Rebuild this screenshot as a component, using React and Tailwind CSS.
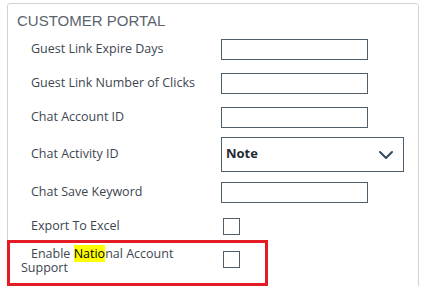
import { ChevronDown } from "lucide-react";

const TextRow = ({ label }) => (
  <div className="flex items-center h-[34px]">
    <label className="w-[213px] pl-[23px] text-[12.5px] text-[#3d4650]">{label}</label>
    <input className="w-[147px] h-[21px] border border-[#4f5f6c] bg-white" />
  </div>
);

const CheckRow = ({ label }) => (
  <div className="flex items-center h-[34px]">
    <label className="w-[215px] pl-[23px] text-[12.5px] text-[#3d4650]">{label}</label>
    <span className="w-[17px] h-[17px] border border-[#4f5f6c] bg-white" />
  </div>
);

export default function App() {
  return (
    <div className="w-[433px] h-[286px] bg-white overflow-hidden font-['Open_Sans',sans-serif]">
      <div className="ml-[7px] mt-[3px] w-[412px] h-[300px] border border-[#d3d3d3] rounded-t-[3px]">
        <h2 className="pl-[9px] pt-[6px] font-['Liberation_Sans',sans-serif] text-[15px] leading-[22px] text-[#5a646e]">
          CUSTOMER PORTAL
        </h2>
        <div>
          <TextRow label="Guest Link Expire Days" />
          <TextRow label="Guest Link Number of Clicks" />
          <TextRow label="Chat Account ID" />
          <div className="flex items-center h-[41px]">
            <label className="w-[213px] pl-[23px] text-[12.5px] text-[#3d4650]">Chat Activity ID</label>
            <div className="w-[183px] h-[35px] border border-[#4f5f6c] flex items-center justify-between pl-[4px] pr-[5px]">
              <span className="text-[13px] font-bold text-[#1f2a35] -mt-[2px]">Note</span>
              <ChevronDown size={24} strokeWidth={2} className="text-[#34495a]" />
            </div>
          </div>
          <TextRow label="Chat Save Keyword" />
          <CheckRow label="Export To Excel" />
          <div className="flex items-start h-[46px] -mt-[3px] -ml-[1px] w-[261px] border-[3px] border-[#e31b23]">
            <label className="w-[195px] pt-[4px] pl-[11px] indent-[10px] text-[12.5px] leading-[14px] text-[#3d4650]">
              Enable <span className="bg-[#ffff00] text-black">Natio</span>nal Account Support
            </label>
            <span className="ml-[18px] mt-[8px] w-[17px] h-[17px] border border-[#4f5f6c] bg-white" />
          </div>
        </div>
      </div>
    </div>
  );
}
